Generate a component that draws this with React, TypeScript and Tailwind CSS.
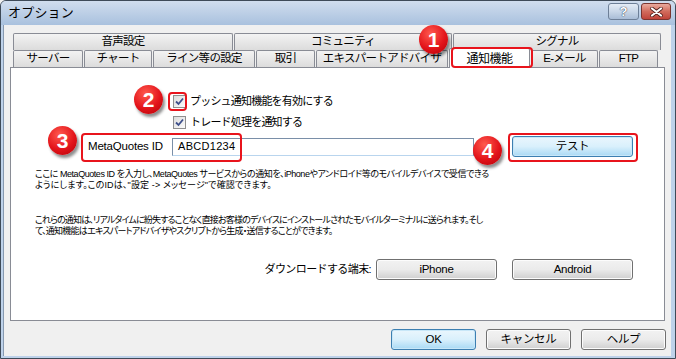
import React from "react";

const ui = "font-['Liberation_Sans','Noto_Sans_CJK_JP',sans-serif]";

function Tab({ label, w, selected }: { label: string; w: string; selected?: boolean }) {
  if (selected) {
    return (
      <div className={`${w} h-[20px] -mt-[3px] -mb-[1px] bg-white border border-b-0 border-[#898c95] rounded-t-[2px] flex items-center justify-center text-[12px] tracking-[-0.5px] whitespace-nowrap relative z-10`}>
        {label}
      </div>
    );
  }
  return (
    <div className={`${w} h-[17px] bg-gradient-to-b from-[#f3f3f3] to-[#dcdcdc] border border-[#898c95] border-b-0 rounded-t-[2px] flex items-center justify-center text-[11.5px] tracking-[-0.7px] whitespace-nowrap leading-none`}>
      {label}
    </div>
  );
}

function Btn({ label, w, def }: { label: string; w: string; def?: boolean }) {
  return (
    <div
      className={`${w} h-[21px] rounded-[3px] border flex items-center justify-center text-[11.5px] tracking-[-0.3px] ${
        def
          ? "border-[#3c7fb1] bg-gradient-to-b from-[#eaf6fd] via-[#d9f0fc] to-[#a8d9f4] shadow-[inset_0_0_0_1px_#c8e7f8]"
          : "border-[#707070] bg-gradient-to-b from-[#f2f2f2] via-[#ebebeb] to-[#cfcfcf] shadow-[inset_0_0_0_1px_#fcfcfc]"
      }`}
    >
      {label}
    </div>
  );
}

function Check() {
  return (
    <div className="w-[13px] h-[13px] border border-[#8f8f8f] bg-gradient-to-br from-[#dcdcdc] to-[#fbfbfb] p-[1px] flex items-center justify-center">
      <svg width="9" height="9" viewBox="0 0 9 9">
        <path d="M1 4.5 L3.5 7 L8 1.5" fill="none" stroke="#3d4f8a" strokeWidth="1.8" />
      </svg>
    </div>
  );
}

function Badge({ n, x, y }: { n: number; x: number; y: number }) {
  return (
    <div
      className="absolute w-[29px] h-[29px] rounded-full bg-[radial-gradient(circle_at_40%_30%,#ff5a4f,#e3141a_55%,#b00008)] shadow-[2px_3px_3px_rgba(0,0,0,0.45)] flex items-center justify-center text-white font-bold text-[21px] font-['Liberation_Sans',sans-serif] z-30"
      style={{ left: x - 14, top: y - 14 }}
    >
      {n}
    </div>
  );
}

function RedBox({ x, y, w, h }: { x: number; y: number; w: number; h: number }) {
  return (
    <div
      className="absolute border-2 border-[#e8141c] rounded-[4px] z-20 pointer-events-none"
      style={{ left: x, top: y, width: w, height: h }}
    />
  );
}

export default function App() {
  return (
    <div className={`relative w-[676px] h-[359px] bg-[#f0f0f0] ${ui} text-black overflow-hidden`}>
      <div className="h-full flex flex-col bg-[#bed2ea] border border-[#3e4a58] rounded-t-[6px]">
        {/* title bar */}
        <div className="h-[24px] flex items-center pl-[7px] pr-[4px] bg-gradient-to-b from-[#d0ddee] to-[#a9c1de] rounded-t-[5px]">
          <span className="text-[13px] tracking-[0.2px]">オプション</span>
          <div className="ml-auto flex gap-[2px] -mt-[3px]">
            <div className="w-[31px] h-[17px] rounded-[3px] border border-[#6d7f97] bg-gradient-to-b from-[#e4ecf6] via-[#c9d7e8] to-[#a9bdd6] flex items-center justify-center text-[13px] font-bold text-white [text-shadow:0_0_1px_#2a3a52,0_0_1px_#2a3a52]">
              ?
            </div>
            <div className="w-[30px] h-[17px] rounded-[3px] border border-[#7a352f] bg-gradient-to-b from-[#e9aa9e] via-[#d16b5c] to-[#c0443a] flex items-center justify-center">
              <svg width="13" height="10" viewBox="0 0 13 10">
                <path d="M2 1.5 L11 8.5 M11 1.5 L2 8.5" stroke="#4a1c18" strokeWidth="3.6" strokeLinecap="round" />
                <path d="M2 1.5 L11 8.5 M11 1.5 L2 8.5" stroke="#ffffff" strokeWidth="2.2" strokeLinecap="round" />
              </svg>
            </div>
          </div>
        </div>

        {/* client */}
        <div className="flex-1 ml-[2px] mr-[4px] mb-[2px] bg-[#f0f0f0] border-l border-[#8799b0] flex flex-col pt-[8px] pl-[6px] pr-[5px]">
          {/* tabs */}
          <div className="flex flex-col pl-[3px]">
            <div className="flex gap-[1px]">
              <Tab label="音声設定" w="w-[220px]" />
              <Tab label="コミュニティ" w="w-[218px]" />
              <Tab label="シグナル" w="w-[208px]" />
            </div>
            <div className="flex gap-[1px] items-end">
              <Tab label="サーバー" w="w-[70px]" />
              <Tab label="チャート" w="w-[68px]" />
              <Tab label="ライン等の設定" w="w-[102px]" />
              <Tab label="取引" w="w-[59px]" />
              <Tab label="エキスパートアドバイザ" w="w-[132px]" />
              <Tab label="通知機能" w="w-[81px]" selected />
              <Tab label="E-メール" w="w-[67px]" />
              <Tab label="FTP" w="w-[59px]" />
            </div>
          </div>

          {/* panel */}
          <div className="h-[254px] w-[655px] bg-white border border-[#898c95] flex flex-col pt-[26px]">
            <div className="flex items-center pl-[162px] gap-[4px] h-[14px]">
              <Check />
              <span className="text-[11px] tracking-[-0.8px]">プッシュ通知機能を有効にする</span>
            </div>
            <div className="flex items-center pl-[162px] gap-[4px] h-[14px] mt-[7px]">
              <Check />
              <span className="text-[11px] tracking-[-0.8px]">トレード処理を通知する</span>
            </div>
            <div className="flex items-center h-[21px] mt-[7px] pl-[77px]">
              <span className="w-[84px] text-[11.5px] tracking-[-0.2px]">MetaQuotes ID</span>
              <div className="w-[302px] h-[18px] border border-[#7a8fa8] border-b-[#b9d5ee] flex items-center pl-[5px] text-[11px] tracking-[0.3px]">
                ABCD1234
              </div>
              <div className="ml-[38px]">
                <Btn label="テスト" w="w-[121px]" def />
              </div>
            </div>
            <div className="mt-[12px] pl-[24px] text-[9px] leading-[11px] [font-feature-settings:'palt'] whitespace-nowrap">
              <div className="tracking-[-0.45px]">ここに MetaQuotes ID を入力し、MetaQuotes サービスからの通知を、iPhoneやアンドロイド等のモバイルデバイスで受信できる</div>
              <div className="tracking-[0.15px]">ようにします。このIDは、"設定 -&gt; メッセージ"で確認できます。</div>
            </div>
            <div className="mt-[24px] pl-[24px] text-[9px] leading-[11px] [font-feature-settings:'palt'] whitespace-nowrap">
              <div className="tracking-[-0.85px]">これらの通知は、リアルタイムに紛失することなく直接お客様のデバイスにインストールされたモバイルターミナルに送られます。そし</div>
              <div className="tracking-[-0.75px]">て、通知機能はエキスパートアドバイザやスクリプトから生成・送信することができます。</div>
            </div>
            <div className="mt-[22px] flex items-center justify-end pr-[31px]">
              <span className="text-[11px] tracking-[-0.6px] mr-[5px]">ダウンロードする端末:</span>
              <Btn label="iPhone" w="w-[121px]" />
              <div className="w-[15px]" />
              <Btn label="Android" w="w-[121px]" />
            </div>
          </div>

          {/* bottom buttons */}
          <div className="flex justify-end gap-[10px] mt-[8px] pr-[0px]">
            <Btn label="OK" w="w-[85px]" def />
            <Btn label="キャンセル" w="w-[85px]" />
            <Btn label="ヘルプ" w="w-[85px]" />
          </div>
        </div>
      </div>

      {/* annotations */}
      <RedBox x={451} y={47} w={82} h={21} />
      <RedBox x={168} y={92} w={19} h={19} />
      <RedBox x={81} y={133} w={161} h={29} />
      <RedBox x={508} y={133} w={130} h={29} />
      <Badge n={1} x={433} y={39} />
      <Badge n={2} x={148} y={99} />
      <Badge n={3} x={62} y={140} />
      <Badge n={4} x={487} y={150} />
    </div>
  );
}
